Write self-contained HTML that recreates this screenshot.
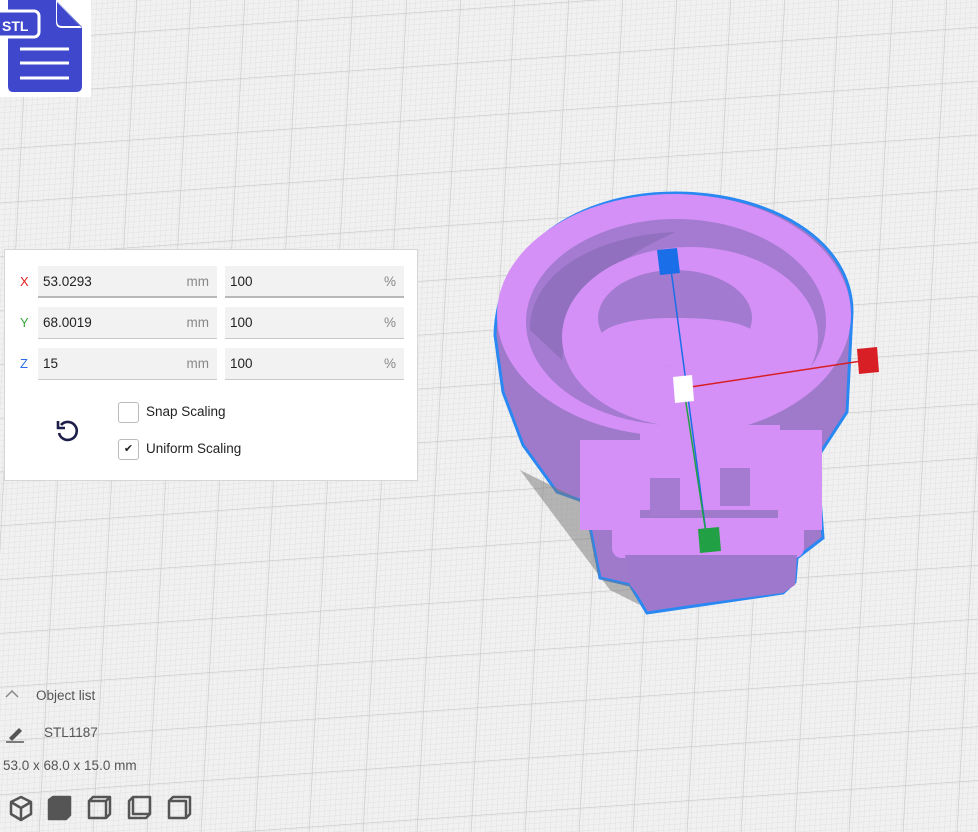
<!DOCTYPE html>
<html><head><meta charset="utf-8"><style>
body{margin:0;width:978px;height:832px;overflow:hidden;background:#f1f1f1;font-family:"Liberation Sans",sans-serif;position:relative}
svg.bg{position:absolute;left:0;top:0}
.panel{position:absolute;left:4px;top:249px;width:414px;height:232px;background:#fff;border:1px solid #d6d6d6;box-sizing:border-box}
.row{position:absolute;left:0;height:32px;width:100%}
.lab{position:absolute;left:15px;top:8px;font-size:13px}
.f{position:absolute;top:0;height:32px;background:#f2f2f2;border-bottom:1px solid #c9c9c9;box-sizing:border-box;font-size:13.5px;color:#222}
.f span{position:absolute;top:8px}
.f .u{right:8px;color:#888}
.cb{position:absolute;left:113px;width:19px;height:19px;border:1px solid #bbb;border-radius:3px;background:#fff}
.ct{position:absolute;left:141px;font-size:13.5px;color:#222}
.t{position:absolute;font-size:13.5px;color:#555}
</style></head><body>
<svg class="bg" width="978" height="832">
<defs>
<pattern id="fine" width="5.4" height="5.4" patternUnits="userSpaceOnUse" patternTransform="skewX(-3) skewY(-4)">
<path d="M5.4 0V5.4M0 5.4H5.4" stroke="#e1e1e1" stroke-width="1" fill="none"/></pattern>
<pattern id="maj" width="54" height="54" patternUnits="userSpaceOnUse" patternTransform="translate(27,40) skewX(-3) skewY(-4)">
<path d="M54 0V54M0 54H54" stroke="#c6c6c6" stroke-width="1.3" fill="none"/></pattern>
</defs>
<rect width="978" height="832" fill="url(#fine)"/>
<rect width="978" height="832" fill="url(#maj)"/>
<path d="M495,335 C497,245 580,193 675,193 C770,193 852,240 852,312 L847,412 L817,458 L823,538 L797,558 L795,582 L783,593 L647,613 L630,585 L600,578 L585,502 L557,492 L523,445 L503,392 Z" fill="#9f7acb" stroke="#2a88f2" stroke-width="3"/>
<path d="M520,470 L585,502 L600,578 L630,585 L640,605 L610,590 Z" fill="#777" opacity=".5"/>
<ellipse cx="674" cy="315" rx="177" ry="121" fill="#d590f7"/>
<ellipse cx="676" cy="322" rx="150" ry="103" fill="#a57bd1"/>
<path d="M530,330 C530,270 600,235 676,232 C610,260 570,300 562,360 Z" fill="#9170c0"/>
<ellipse cx="690" cy="337" rx="128" ry="90" fill="#d590f7"/>
<ellipse cx="675" cy="318" rx="77" ry="48" fill="#a27bd0"/>
<path d="M600,335 C610,355 640,366 675,366 C715,366 745,356 752,330 C740,322 715,318 675,318 C635,318 608,324 600,335 Z" fill="#d590f7"/>
<rect x="580" y="440" width="60" height="90" fill="#d590f7"/>
<rect x="778" y="430" width="44" height="100" fill="#d590f7"/>
<rect x="640" y="425" width="140" height="85" fill="#d590f7"/>
<rect x="650" y="478" width="30" height="38" fill="#a57bd1"/>
<rect x="720" y="468" width="30" height="38" fill="#a57bd1"/>
<rect x="612" y="518" width="192" height="40" rx="10" fill="#d590f7"/>
<path d="M625,555 L797,555 L795,585 L783,593 L650,610 L630,585 Z" fill="#9e78cc"/>
<line x1="670" y1="262" x2="707" y2="540" stroke="#1a6ee8" stroke-width="1.5"/>
<line x1="684" y1="390" x2="707" y2="540" stroke="#22a045" stroke-width="1.5"/>
<line x1="684" y1="388" x2="868" y2="360" stroke="#d81f26" stroke-width="1.5"/>
<polygon points="657,250 677,248 680,273 660,275" fill="#1a6ee8"/>
<polygon points="673,377 692,375 694,401 675,403" fill="#fff"/>
<polygon points="698,529 719,527 721,551 700,553" fill="#22a045"/>
<polygon points="857,349 877,347 879,372 859,374" fill="#d81f26"/>
<rect x="0" y="0" width="91" height="97" fill="#fff"/>
<path d="M8,0 H56 L82,27 V86 Q82,92 76,92 H13 Q8,92 8,86 Z" fill="#3f48cc"/>
<path d="M56,0 V22 Q56,28 62,28 H82" fill="#fff"/>
<path d="M57,2 V21 Q57,26 62,26 H80 Z" fill="#3f48cc"/>
<rect x="-4" y="11" width="43" height="26" rx="5" fill="#3f48cc" stroke="#fff" stroke-width="3"/>
<text x="2" y="31" font-family="Liberation Sans" font-weight="bold" font-size="14" fill="#fff">STL</text>
<path d="M20,49H69M20,63H69M20,78H69" stroke="#fff" stroke-width="3"/>
<path d="M6,697 L12,691 L18,697" stroke="#888" stroke-width="1.5" fill="none"/>
<path d="M9,738 L19,728 L22,731 L12,741 Z" fill="#555"/><line x1="6" y1="742" x2="24" y2="742" stroke="#555" stroke-width="1.5"/>
<g stroke="#555" stroke-width="2.5" fill="none" stroke-linejoin="round">
<path d="M21,797 L31,802 V814 L21,820 L11,814 V802 Z M11,802 L21,808 L31,802 M21,808 V820"/>
<path d="M49,800 L53,797 H70 V815 L66,819 H49 Z" fill="#555"/>
<path d="M89,801 L93,797 H110 V814 L106,818 H89 Z M89,801 H106 V818 M106,801 L110,797"/>
<path d="M129,801 L133,797 H150 V814 L146,818 H129 Z M133,797 V814 H150" />
<path d="M169,801 L173,797 H190 V814 L186,818 H169 Z M169,801 H186 V818" />
</g>
</svg>
<div class="panel">
<div class="row" style="top:16px"><span class="lab" style="color:#e02424">X</span>
<div class="f" style="left:33px;width:179px;border-bottom:2px solid #b8b8b8"><span style="left:5px">53.0293</span><span class="u">mm</span></div>
<div class="f" style="left:220px;width:179px;border-bottom:2px solid #b8b8b8"><span style="left:5px">100</span><span class="u">%</span></div></div>
<div class="row" style="top:57px"><span class="lab" style="color:#3aa640">Y</span>
<div class="f" style="left:33px;width:179px"><span style="left:5px">68.0019</span><span class="u">mm</span></div>
<div class="f" style="left:220px;width:179px"><span style="left:5px">100</span><span class="u">%</span></div></div>
<div class="row" style="top:98px"><span class="lab" style="color:#2a6fe8">Z</span>
<div class="f" style="left:33px;width:179px"><span style="left:5px">15</span><span class="u">mm</span></div>
<div class="f" style="left:220px;width:179px"><span style="left:5px">100</span><span class="u">%</span></div></div>
<svg style="position:absolute;left:50px;top:168px" width="26" height="28"><path d="M6,7 A9,9 0 1 1 4,15" stroke="#1d1d4a" stroke-width="2.6" fill="none"/><path d="M3,3 V10 H10" stroke="#1d1d4a" stroke-width="2.6" fill="none"/></svg>
<div class="cb" style="top:152px"></div><div class="ct" style="top:154px">Snap Scaling</div>
<div class="cb" style="top:189px;text-align:center;font-size:11px;line-height:19px;color:#222">✔</div><div class="ct" style="top:191px">Uniform Scaling</div>
</div>
<div class="t" style="left:36px;top:688px">Object list</div>
<div class="t" style="left:44px;top:725px">STL1187</div>
<div class="t" style="left:3px;top:758px">53.0 x 68.0 x 15.0 mm</div>
</body></html>
